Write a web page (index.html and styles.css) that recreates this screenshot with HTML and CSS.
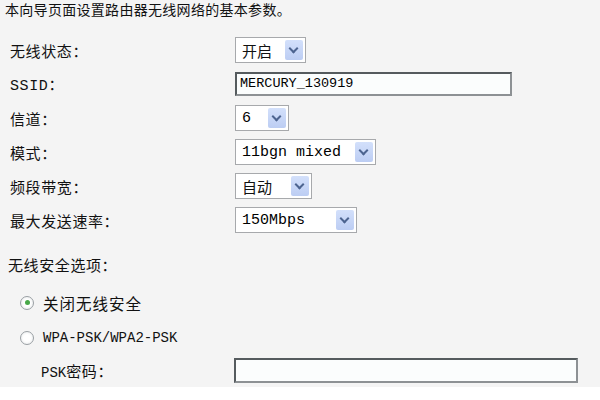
FILE: index.html
```html
<!DOCTYPE html>
<html lang="zh-CN">
<head>
  <meta charset="UTF-8" />
  <title>无线网络设置</title>
  <link rel="stylesheet" href="styles.css">
</head>
<body>
<div class="panel">
  <p class="intro">本向导页面设置路由器无线网络的基本参数。</p>

  <!-- basic params -->
  <div class="form">
    <label>无线状态：</label>
    <div class="select w-state"><span>开启</span><i class="arrow"></i></div>

    <label class="mono-label">SSID：</label>
    <div class="textbox ssid">MERCURY_130919</div>

    <label>信道：</label>
    <div class="select w-channel"><span class="mono">6</span><i class="arrow"></i></div>

    <label>模式：</label>
    <div class="select w-mode"><span class="mono">11bgn mixed</span><i class="arrow"></i></div>

    <label>频段带宽：</label>
    <div class="select w-band"><span>自动</span><i class="arrow"></i></div>

    <label>最大发送速率：</label>
    <div class="select w-rate"><span class="mono">150Mbps</span><i class="arrow"></i></div>
  </div>

  <!-- security -->
  <p class="section">无线安全选项：</p>
  <div class="radio-row first"><span class="radio checked"></span><span>关闭无线安全</span></div>
  <div class="radio-row"><span class="radio"></span><span class="mono">WPA-PSK/WPA2-PSK</span></div>
  <div class="psk-row">
    <label class="psk-label"><span class="mono">PSK</span>密码：</label>
    <div class="textbox psk"></div>
  </div>
</div>
</body>
</html>
```

FILE: styles.css
```css
html,body{margin:0;padding:0;background:#fff;color:#111;font-family:"Noto Sans CJK SC","Noto Sans",sans-serif;}
.panel{height:387px;background:#f4f4f4;overflow:hidden;}
.intro{margin:0;padding:1px 0 0 5px;font-size:14px;line-height:16px;letter-spacing:0.3px;}
.mono{font-family:"Liberation Mono","DejaVu Sans Mono",monospace;}
.form{display:grid;grid-template-columns:225px auto;grid-auto-rows:34px;align-items:center;margin-top:16px;padding-left:10px;}
.form label,.section,.psk-label{font-size:15px;letter-spacing:0.6px;}
.mono-label{font-family:"Liberation Mono","Noto Sans CJK SC",monospace;}
.select{display:flex;align-items:center;justify-content:space-between;height:26px;box-sizing:border-box;border:1px solid #a7a9ac;background:#fff;padding:2px 2px 2px 6px;font-size:15px;}
.select .mono{font-size:15px;color:#000;}
.arrow{display:block;width:18px;height:100%;background:linear-gradient(#d3e0fb,#bccdf3);border-radius:2px;position:relative;}
.arrow::after{content:"";position:absolute;left:5px;top:5px;width:5px;height:5px;border-right:2px solid #4d6490;border-bottom:2px solid #4d6490;transform:rotate(45deg);}
.w-state{width:71px;}
.w-channel{width:54px;}
.w-mode{width:141px;}
.w-band{width:77px;}
.w-rate{width:122px;}
.textbox{box-sizing:border-box;height:24px;border:2px solid #555b5e;border-right-color:#8d9194;border-bottom-color:#8d9194;background:#fbfdfd;font-family:"Liberation Mono",monospace;font-size:13.5px;line-height:20px;padding-left:3px;color:#000;}
.ssid{width:277px;}
.section{margin:17px 0 0 8px;line-height:22px;}
.radio-row{display:flex;align-items:center;height:35px;padding-left:20px;font-size:15.5px;letter-spacing:1px;}
.radio-row.first{margin-top:9px;}
.radio{width:14px;height:14px;box-sizing:border-box;border:1px solid #9aa0a4;border-radius:50%;background:radial-gradient(circle,#ffffff 40%,#e4e6e8);margin-right:9px;position:relative;}
.radio.checked::after{content:"";position:absolute;left:3.5px;top:3.5px;width:5px;height:5px;border-radius:50%;background:#48a848;}
.radio-row .mono{font-size:14px;letter-spacing:0;}
.psk-row{display:flex;align-items:center;height:26px;padding-left:41px;margin-top:2px;}
.psk-label{width:193px;}
.psk-label .mono{font-size:14px;letter-spacing:0;}
.psk{width:344px;height:25px;}
```
